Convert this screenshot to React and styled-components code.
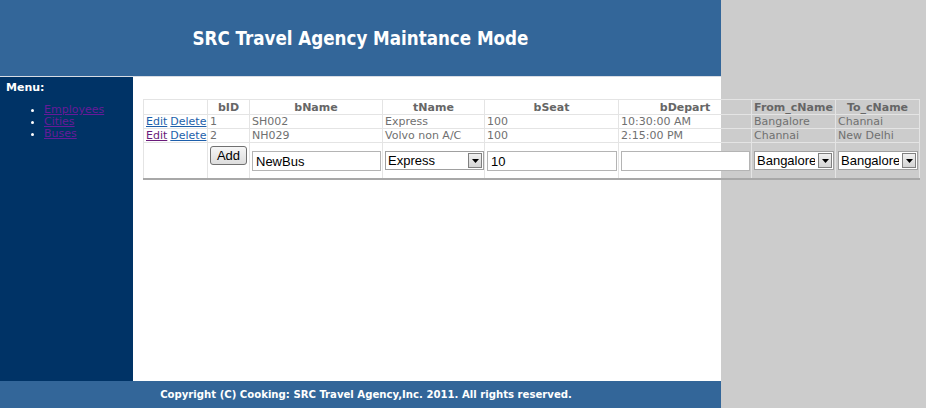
import React from "react";
import styled, { createGlobalStyle } from "styled-components";

const GlobalStyle = createGlobalStyle`
  html, body { margin: 0; padding: 0; background: #cccccc; }
  body { font-family: Verdana, "DejaVu Sans", sans-serif; font-size: 11px; }
`;

const Page = styled.div`
  width: 721px;
  display: flex;
  flex-direction: column;
`;

const Header = styled.header`
  height: 76px;
  background: #336699;
  border-bottom: 1px solid #d8dce4;
  display: flex;
  align-items: center;
  justify-content: center;
`;

const Title = styled.h1`
  margin: 0;
  color: #ffffff;
  font-family: "DejaVu Sans Condensed", "DejaVu Sans", sans-serif;
  font-stretch: condensed;
  font-weight: bold;
  font-size: 18.6px;
`;

const Body = styled.div`
  display: flex;
  height: 304px;
`;

const Sidebar = styled.nav`
  width: 133px;
  flex: none;
  background: #003366;
  padding: 4px 0 0 6px;
  box-sizing: border-box;
`;

const MenuLabel = styled.div`
  color: #ffffff;
  font-weight: bold;
  line-height: 13px;
`;

const MenuList = styled.ul`
  margin: 10px 0 0;
  padding-left: 38px;
  color: #ffffff;
  line-height: 12px;
`;

const MenuLink = styled.a`
  color: #661a99;
  text-decoration: underline;
`;

const Content = styled.main`
  flex: 1;
  background: #ffffff;
  padding: 22px 0 0 10px;
  min-width: 0;
`;

const Table = styled.table`
  border-collapse: collapse;
  table-layout: fixed;
  width: 776px;
  border-bottom: 2px solid #a8a8a8;
  color: #707070;
`;

const Cell = styled.td`
  border: 1px solid #e4e4e4;
  padding: 0 2px;
  height: 13px;
  line-height: 13px;
  text-align: left;
  white-space: nowrap;
  overflow: visible;
  vertical-align: middle;
`;

const HeadCell = styled.th`
  border: 1px solid #e4e4e4;
  padding: 0 2px;
  height: 14px;
  line-height: 13px;
  text-align: center;
  font-weight: bold;
  color: #666666;
`;

const InsertCell = styled.td`
  border: 1px solid #e4e4e4;
  border-bottom: none;
  height: 36px;
  padding: ${(p) => (p.$button ? "3px 0 0 2px" : "8px 1px 0 2px")};
  vertical-align: top;
  box-sizing: border-box;
`;

const RowLink = styled.a`
  color: ${(p) => (p.$visited ? "#6a1b7a" : "#1d5fab")};
  text-decoration: underline;
  margin-right: 3px;
`;

const AddButton = styled.button`
  font-family: "Liberation Sans", Arial, sans-serif;
  font-size: 13px;
  height: 19px;
  width: 37px;
  padding: 0;
  border: 1px solid #707070;
  border-radius: 3px;
  background: linear-gradient(#f6f6f6, #dddddd);
  color: #000;
`;

const TextInput = styled.input`
  display: block;
  width: 100%;
  box-sizing: border-box;
  height: 20px;
  border: 1px solid #b4b4b4;
  padding: 0 3px;
  font-family: "Liberation Sans", Arial, sans-serif;
  font-size: 13px;
  color: #000;
  background: #fff;
`;

const SelectBox = styled.div`
  position: relative;
  height: 19px;
  width: ${(p) => p.$w}px;
`;

const NativeSelect = styled.select`
  appearance: none;
  -webkit-appearance: none;
  width: 100%;
  height: 100%;
  box-sizing: border-box;
  border: 1px solid #a0a0a0;
  border-radius: 0;
  background: #fff;
  padding: 0 18px 0 2px;
  font-family: "Liberation Sans", Arial, sans-serif;
  font-size: 13px;
  color: #000;
`;

const Arrow = styled.span`
  position: absolute;
  right: 2px;
  top: 2px;
  width: 14px;
  height: 15px;
  box-sizing: border-box;
  border: 1px solid #808080;
  background: linear-gradient(#f0f0f0, #d4d4d4);
  display: flex;
  align-items: center;
  justify-content: center;
  pointer-events: none;
`;

const Footer = styled.footer`
  height: 27px;
  background: #336699;
  color: #ffffff;
  font-family: "DejaVu Sans Condensed", "DejaVu Sans", sans-serif;
  font-stretch: condensed;
  font-weight: bold;
  font-size: 11.25px;
  display: flex;
  align-items: center;
  justify-content: center;
  padding-left: 11px;
`;

const Select = ({ w, value, options }) => (
  <SelectBox $w={w}>
    <NativeSelect defaultValue={value}>
      {options.map((o) => (
        <option key={o}>{o}</option>
      ))}
    </NativeSelect>
    <Arrow>
      <svg width="7" height="4" viewBox="0 0 7 4">
        <path d="M0 0h7L3.5 4z" fill="#000" />
      </svg>
    </Arrow>
  </SelectBox>
);

const widths = [64, 42, 133, 102, 134, 133, 84, 84];
const heads = ["", "bID", "bName", "tName", "bSeat", "bDepart", "From_cName", "To_cName"];
const rows = [
  { id: 1, name: "SH002", t: "Express", seat: "100", dep: "10:30:00 AM", from: "Bangalore", to: "Channai", visited: false },
  { id: 2, name: "NH029", t: "Volvo non A/C", seat: "100", dep: "2:15:00 PM", from: "Channai", to: "New Delhi", visited: true },
];
const cities = ["Bangalore", "Channai", "New Delhi"];

export default function App() {
  return (
    <>
      <GlobalStyle />
      <Page>
        <Header>
          <Title>SRC Travel Agency Maintance Mode</Title>
        </Header>
        <Body>
          <Sidebar>
            <MenuLabel>Menu:</MenuLabel>
            <MenuList>
              <li><MenuLink href="#">Employees</MenuLink></li>
              <li><MenuLink href="#">Cities</MenuLink></li>
              <li><MenuLink href="#">Buses</MenuLink></li>
            </MenuList>
          </Sidebar>
          <Content>
            <Table>
              <colgroup>
                {widths.map((w, i) => (
                  <col key={i} style={{ width: w }} />
                ))}
              </colgroup>
              <thead>
                <tr>
                  {heads.map((h, i) => (
                    <HeadCell key={i}>{h}</HeadCell>
                  ))}
                </tr>
              </thead>
              <tbody>
                {rows.map((r) => (
                  <tr key={r.id}>
                    <Cell>
                      <RowLink href="#" $visited={r.visited}>Edit</RowLink>
                      <RowLink href="#">Delete</RowLink>
                    </Cell>
                    <Cell>{r.id}</Cell>
                    <Cell>{r.name}</Cell>
                    <Cell>{r.t}</Cell>
                    <Cell>{r.seat}</Cell>
                    <Cell>{r.dep}</Cell>
                    <Cell>{r.from}</Cell>
                    <Cell>{r.to}</Cell>
                  </tr>
                ))}
                <tr>
                  <InsertCell />
                  <InsertCell $button>
                    <AddButton>Add</AddButton>
                  </InsertCell>
                  <InsertCell><TextInput defaultValue="NewBus" /></InsertCell>
                  <InsertCell>
                    <Select w={99} value="Express" options={["Express", "Volvo non A/C"]} />
                  </InsertCell>
                  <InsertCell><TextInput defaultValue="10" /></InsertCell>
                  <InsertCell><TextInput defaultValue="" /></InsertCell>
                  <InsertCell><Select w={80} value="Bangalore" options={cities} /></InsertCell>
                  <InsertCell><Select w={80} value="Bangalore" options={cities} /></InsertCell>
                </tr>
              </tbody>
            </Table>
          </Content>
        </Body>
        <Footer>Copyright (C) Cooking: SRC Travel Agency,Inc. 2011. All rights reserved.</Footer>
      </Page>
    </>
  );
}
